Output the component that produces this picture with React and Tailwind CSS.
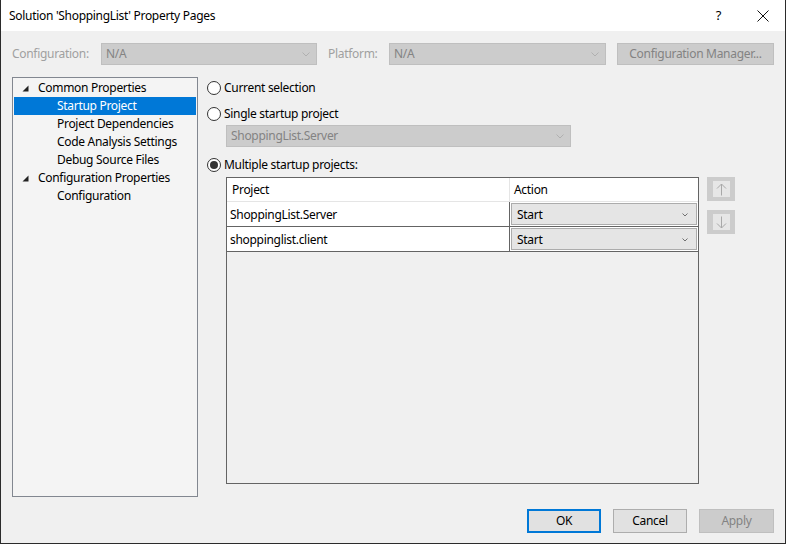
import React from "react";

const font = { fontFamily: '"Noto Sans", "Segoe UI", sans-serif' };

const Chevron = ({ color = "#b0b0b0", w = 8 }) => (
  <svg width={w} height={w / 2 + 1} viewBox={`0 0 ${w} ${w / 2 + 1}`} className="shrink-0">
    <path d={`M0.5 0.5 L${w / 2} ${w / 2} L${w - 0.5} 0.5`} fill="none" stroke={color} strokeWidth="1" />
  </svg>
);

const Triangle = () => (
  <svg width="7" height="7" viewBox="0 0 7 7" className="shrink-0">
    <path d="M6.5 0.5 L6.5 6.5 L0.5 6.5 Z" fill="#222" />
  </svg>
);

const Radio = ({ checked, label }) => (
  <div className="flex items-center h-[18px]">
    <div className="w-[14px] h-[14px] rounded-full border border-[#333] bg-white flex items-center justify-center">
      {checked && <div className="w-[8px] h-[8px] rounded-full bg-[#333]" />}
    </div>
    <span className="ml-[3px] text-[12px] tracking-[-0.3px] text-black">{label}</span>
  </div>
);

const DisabledCombo = ({ value, w }) => (
  <div className={`${w} h-[22px] border border-[#bfbfbf] bg-[#cccccc] flex items-center justify-between pl-[4px] pr-[6px]`}>
    <span className="text-[12px] tracking-[-0.3px] text-[#838383]">{value}</span>
    <Chevron />
  </div>
);

const tree = [
  { label: "Common Properties", lvl: 0 },
  { label: "Startup Project", lvl: 1, sel: true },
  { label: "Project Dependencies", lvl: 1 },
  { label: "Code Analysis Settings", lvl: 1 },
  { label: "Debug Source Files", lvl: 1 },
  { label: "Configuration Properties", lvl: 0 },
  { label: "Configuration", lvl: 1 },
];

const rows = ["ShoppingList.Server", "shoppinglist.client"];

const ArrowBtn = ({ up }) => (
  <div className="w-[28px] h-[24px] bg-[#cccccc] flex items-center justify-center">
    <div className="w-[17px] h-[16px] bg-[#e6e6e6] flex items-center justify-center">
      <svg width="11" height="13" viewBox="0 0 11 13">
        {up ? (
          <path d="M5.5 12.5 V1 M1 5.5 L5.5 1 L10 5.5" fill="none" stroke="#a8a8a8" strokeWidth="1" />
        ) : (
          <path d="M5.5 0.5 V12 M1 7.5 L5.5 12 L10 7.5" fill="none" stroke="#a8a8a8" strokeWidth="1" />
        )}
      </svg>
    </div>
  </div>
);

const App = () => {
  return (
    <div style={font} className="w-[786px] h-[544px] bg-[#f0f0f0] border-x border-b border-[#2b2b2b] flex flex-col text-black tracking-[-0.3px]">
      {/* title bar */}
      <div className="h-[31px] bg-white flex items-center shrink-0">
        <span className="ml-[8px] text-[12px]">Solution 'ShoppingList' Property Pages</span>
        <span className="ml-auto mr-[36px] text-[13px]">?</span>
        <svg width="12" height="12" viewBox="0 0 12 12" className="mr-[16px]">
          <path d="M0.5 0.5 L11.5 11.5 M11.5 0.5 L0.5 11.5" stroke="#111" strokeWidth="1" />
        </svg>
      </div>

      {/* configuration row */}
      <div className="flex items-center mt-[12px] pl-[11px] h-[22px]">
        <span className="text-[12px] text-[#a0a0a0] w-[89px]">Configuration:</span>
        <DisabledCombo value="N/A" w="w-[216px]" />
        <span className="text-[12px] text-[#a0a0a0] ml-[11px] w-[61px]">Platform:</span>
        <DisabledCombo value="N/A" w="w-[217px]" />
        <div className="ml-[11px] w-[157px] h-[22px] border border-[#bfbfbf] bg-[#cccccc] flex items-center justify-center text-[12px] text-[#838383]">
          Configuration Manager...
        </div>
      </div>

      {/* main area */}
      <div className="flex mt-[12px] pl-[11px]">
        <div className="w-[186px] h-[420px] border border-[#828790] bg-[#f4f4f4] pt-[1px] px-[1px]">
          {tree.map((t) => (
            <div
              key={t.label}
              className={`h-[18px] flex items-center text-[12px] ${t.sel ? "bg-[#0078d7] text-white" : "text-black"}`}
            >
              {t.lvl === 0 ? (
                <>
                  <span className="ml-[8px] w-[15px] flex items-center"><Triangle /></span>
                  <span className="ml-[1px]">{t.label}</span>
                </>
              ) : (
                <span className="ml-[43px]">{t.label}</span>
              )}
            </div>
          ))}
        </div>

        <div className="ml-[9px] flex flex-col">
          <div className="mt-[2px]">
            <Radio label="Current selection" />
          </div>
          <div className="mt-[8px]">
            <Radio label="Single startup project" />
          </div>
          <div className="mt-[2px] ml-[19px]">
            <DisabledCombo value="ShoppingList.Server" w="w-[345px]" />
          </div>
          <div className="mt-[9px]">
            <Radio checked label="Multiple startup projects:" />
          </div>

          <div className="flex mt-[3px] ml-[19px]">
            <div className="w-[473px] h-[307px] border border-[#646464] bg-[#f0f0f0] flex flex-col">
              <div className="flex h-[24px] bg-white border-b border-[#e5e5e5]">
                <div className="w-[283px] border-r border-[#e5e5e5] flex items-center pl-[5px] pt-[1px] text-[12px]">Project</div>
                <div className="flex-1 flex items-center pl-[4px] pt-[1px] text-[12px]">Action</div>
              </div>
              {rows.map((r) => (
                <div key={r} className="flex h-[25px] bg-white border-b border-[#646464]">
                  <div className="w-[283px] border-r border-[#646464] flex items-center pl-[3px] pt-[1px] text-[12px]">{r}</div>
                  <div className="flex-1 p-[1px]">
                    <div className="h-full border border-[#acacac] bg-[#e5e5e5] flex items-center justify-between pl-[5px] pr-[8px] pt-[1px] text-[12px]">
                      <span>Start</span>
                      <Chevron color="#707070" w={6} />
                    </div>
                  </div>
                </div>
              ))}
            </div>
            <div className="ml-[8px] flex flex-col gap-[9px]">
              <ArrowBtn up />
              <ArrowBtn />
            </div>
          </div>
        </div>
      </div>

      {/* buttons */}
      <div className="flex justify-end mt-[12px] pr-[11px] gap-[12px]">
        <div className="w-[74px] h-[24px] border-2 border-[#0078d7] bg-[#e1e1e1] flex items-center justify-center text-[12px]">OK</div>
        <div className="w-[74px] h-[24px] border border-[#adadad] bg-[#e1e1e1] flex items-center justify-center text-[12px]">Cancel</div>
        <div className="w-[75px] h-[24px] border border-[#bfbfbf] bg-[#cccccc] flex items-center justify-center text-[12px] text-[#838383]">Apply</div>
      </div>
    </div>
  );
};

export default App;
